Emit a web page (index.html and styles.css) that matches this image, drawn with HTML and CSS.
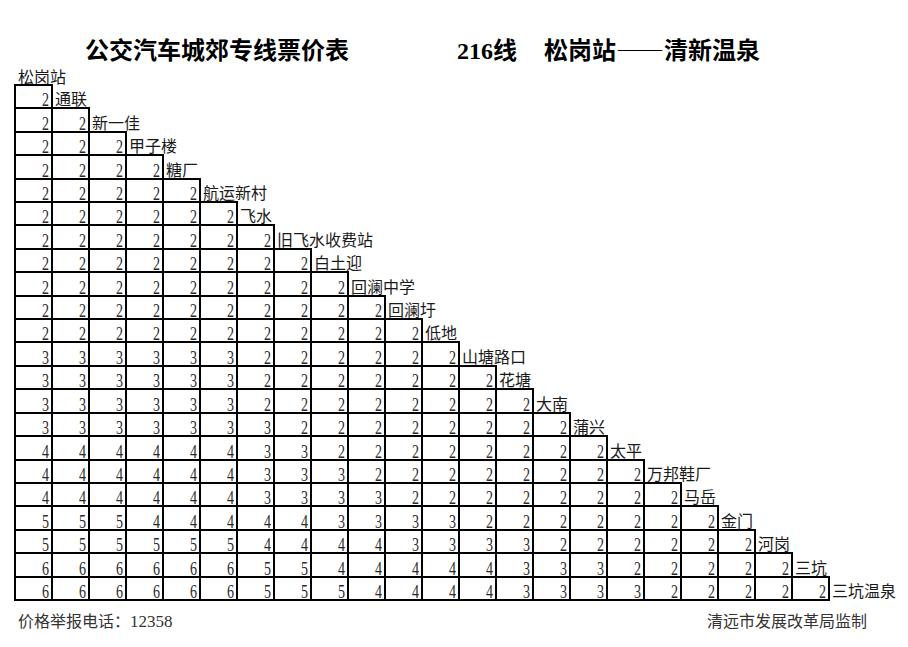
FILE: index.html
```html
<!DOCTYPE html>
<html lang="zh-CN">
<head>
<meta charset="utf-8">
<title>216线票价表</title>
<link rel="stylesheet" href="styles.css">
</head>
<body>
<div class="page">
  <div class="title">
    <span class="title-main">公交汽车城郊专线票价表</span>
    <span class="title-route"><span class="route-num">216</span>线<span class="route-stops">松岗站——清新温泉</span></span>
  </div>
  <div class="origin">松岗站</div>
  <div class="fare">
    <div class="row"><span class="c"><b>2</b></span><span class="stop">通联</span></div>
    <div class="row"><span class="c"><b>2</b></span><span class="c"><b>2</b></span><span class="stop">新一佳</span></div>
    <div class="row"><span class="c"><b>2</b></span><span class="c"><b>2</b></span><span class="c"><b>2</b></span><span class="stop">甲子楼</span></div>
    <div class="row"><span class="c"><b>2</b></span><span class="c"><b>2</b></span><span class="c"><b>2</b></span><span class="c"><b>2</b></span><span class="stop">糖厂</span></div>
    <div class="row"><span class="c"><b>2</b></span><span class="c"><b>2</b></span><span class="c"><b>2</b></span><span class="c"><b>2</b></span><span class="c"><b>2</b></span><span class="stop">航运新村</span></div>
    <div class="row"><span class="c"><b>2</b></span><span class="c"><b>2</b></span><span class="c"><b>2</b></span><span class="c"><b>2</b></span><span class="c"><b>2</b></span><span class="c"><b>2</b></span><span class="stop">飞水</span></div>
    <div class="row"><span class="c"><b>2</b></span><span class="c"><b>2</b></span><span class="c"><b>2</b></span><span class="c"><b>2</b></span><span class="c"><b>2</b></span><span class="c"><b>2</b></span><span class="c"><b>2</b></span><span class="stop">旧飞水收费站</span></div>
    <div class="row"><span class="c"><b>2</b></span><span class="c"><b>2</b></span><span class="c"><b>2</b></span><span class="c"><b>2</b></span><span class="c"><b>2</b></span><span class="c"><b>2</b></span><span class="c"><b>2</b></span><span class="c"><b>2</b></span><span class="stop">白土迎</span></div>
    <div class="row"><span class="c"><b>2</b></span><span class="c"><b>2</b></span><span class="c"><b>2</b></span><span class="c"><b>2</b></span><span class="c"><b>2</b></span><span class="c"><b>2</b></span><span class="c"><b>2</b></span><span class="c"><b>2</b></span><span class="c"><b>2</b></span><span class="stop">回澜中学</span></div>
    <div class="row"><span class="c"><b>2</b></span><span class="c"><b>2</b></span><span class="c"><b>2</b></span><span class="c"><b>2</b></span><span class="c"><b>2</b></span><span class="c"><b>2</b></span><span class="c"><b>2</b></span><span class="c"><b>2</b></span><span class="c"><b>2</b></span><span class="c"><b>2</b></span><span class="stop">回澜圩</span></div>
    <div class="row"><span class="c"><b>2</b></span><span class="c"><b>2</b></span><span class="c"><b>2</b></span><span class="c"><b>2</b></span><span class="c"><b>2</b></span><span class="c"><b>2</b></span><span class="c"><b>2</b></span><span class="c"><b>2</b></span><span class="c"><b>2</b></span><span class="c"><b>2</b></span><span class="c"><b>2</b></span><span class="stop">低地</span></div>
    <div class="row"><span class="c"><b>3</b></span><span class="c"><b>3</b></span><span class="c"><b>3</b></span><span class="c"><b>3</b></span><span class="c"><b>3</b></span><span class="c"><b>3</b></span><span class="c"><b>2</b></span><span class="c"><b>2</b></span><span class="c"><b>2</b></span><span class="c"><b>2</b></span><span class="c"><b>2</b></span><span class="c"><b>2</b></span><span class="stop">山塘路口</span></div>
    <div class="row"><span class="c"><b>3</b></span><span class="c"><b>3</b></span><span class="c"><b>3</b></span><span class="c"><b>3</b></span><span class="c"><b>3</b></span><span class="c"><b>3</b></span><span class="c"><b>2</b></span><span class="c"><b>2</b></span><span class="c"><b>2</b></span><span class="c"><b>2</b></span><span class="c"><b>2</b></span><span class="c"><b>2</b></span><span class="c"><b>2</b></span><span class="stop">花塘</span></div>
    <div class="row"><span class="c"><b>3</b></span><span class="c"><b>3</b></span><span class="c"><b>3</b></span><span class="c"><b>3</b></span><span class="c"><b>3</b></span><span class="c"><b>3</b></span><span class="c"><b>2</b></span><span class="c"><b>2</b></span><span class="c"><b>2</b></span><span class="c"><b>2</b></span><span class="c"><b>2</b></span><span class="c"><b>2</b></span><span class="c"><b>2</b></span><span class="c"><b>2</b></span><span class="stop">大南</span></div>
    <div class="row"><span class="c"><b>3</b></span><span class="c"><b>3</b></span><span class="c"><b>3</b></span><span class="c"><b>3</b></span><span class="c"><b>3</b></span><span class="c"><b>3</b></span><span class="c"><b>3</b></span><span class="c"><b>2</b></span><span class="c"><b>2</b></span><span class="c"><b>2</b></span><span class="c"><b>2</b></span><span class="c"><b>2</b></span><span class="c"><b>2</b></span><span class="c"><b>2</b></span><span class="c"><b>2</b></span><span class="stop">蒲兴</span></div>
    <div class="row"><span class="c"><b>4</b></span><span class="c"><b>4</b></span><span class="c"><b>4</b></span><span class="c"><b>4</b></span><span class="c"><b>4</b></span><span class="c"><b>4</b></span><span class="c"><b>3</b></span><span class="c"><b>3</b></span><span class="c"><b>2</b></span><span class="c"><b>2</b></span><span class="c"><b>2</b></span><span class="c"><b>2</b></span><span class="c"><b>2</b></span><span class="c"><b>2</b></span><span class="c"><b>2</b></span><span class="c"><b>2</b></span><span class="stop">太平</span></div>
    <div class="row"><span class="c"><b>4</b></span><span class="c"><b>4</b></span><span class="c"><b>4</b></span><span class="c"><b>4</b></span><span class="c"><b>4</b></span><span class="c"><b>4</b></span><span class="c"><b>3</b></span><span class="c"><b>3</b></span><span class="c"><b>3</b></span><span class="c"><b>2</b></span><span class="c"><b>2</b></span><span class="c"><b>2</b></span><span class="c"><b>2</b></span><span class="c"><b>2</b></span><span class="c"><b>2</b></span><span class="c"><b>2</b></span><span class="c"><b>2</b></span><span class="stop">万邦鞋厂</span></div>
    <div class="row"><span class="c"><b>4</b></span><span class="c"><b>4</b></span><span class="c"><b>4</b></span><span class="c"><b>4</b></span><span class="c"><b>4</b></span><span class="c"><b>4</b></span><span class="c"><b>3</b></span><span class="c"><b>3</b></span><span class="c"><b>3</b></span><span class="c"><b>3</b></span><span class="c"><b>2</b></span><span class="c"><b>2</b></span><span class="c"><b>2</b></span><span class="c"><b>2</b></span><span class="c"><b>2</b></span><span class="c"><b>2</b></span><span class="c"><b>2</b></span><span class="c"><b>2</b></span><span class="stop">马岳</span></div>
    <div class="row"><span class="c"><b>5</b></span><span class="c"><b>5</b></span><span class="c"><b>5</b></span><span class="c"><b>4</b></span><span class="c"><b>4</b></span><span class="c"><b>4</b></span><span class="c"><b>4</b></span><span class="c"><b>4</b></span><span class="c"><b>3</b></span><span class="c"><b>3</b></span><span class="c"><b>3</b></span><span class="c"><b>3</b></span><span class="c"><b>2</b></span><span class="c"><b>2</b></span><span class="c"><b>2</b></span><span class="c"><b>2</b></span><span class="c"><b>2</b></span><span class="c"><b>2</b></span><span class="c"><b>2</b></span><span class="stop">金门</span></div>
    <div class="row"><span class="c"><b>5</b></span><span class="c"><b>5</b></span><span class="c"><b>5</b></span><span class="c"><b>5</b></span><span class="c"><b>5</b></span><span class="c"><b>5</b></span><span class="c"><b>4</b></span><span class="c"><b>4</b></span><span class="c"><b>4</b></span><span class="c"><b>4</b></span><span class="c"><b>3</b></span><span class="c"><b>3</b></span><span class="c"><b>3</b></span><span class="c"><b>3</b></span><span class="c"><b>2</b></span><span class="c"><b>2</b></span><span class="c"><b>2</b></span><span class="c"><b>2</b></span><span class="c"><b>2</b></span><span class="c"><b>2</b></span><span class="stop">河岗</span></div>
    <div class="row"><span class="c"><b>6</b></span><span class="c"><b>6</b></span><span class="c"><b>6</b></span><span class="c"><b>6</b></span><span class="c"><b>6</b></span><span class="c"><b>6</b></span><span class="c"><b>5</b></span><span class="c"><b>5</b></span><span class="c"><b>4</b></span><span class="c"><b>4</b></span><span class="c"><b>4</b></span><span class="c"><b>4</b></span><span class="c"><b>4</b></span><span class="c"><b>3</b></span><span class="c"><b>3</b></span><span class="c"><b>3</b></span><span class="c"><b>2</b></span><span class="c"><b>2</b></span><span class="c"><b>2</b></span><span class="c"><b>2</b></span><span class="c"><b>2</b></span><span class="stop">三坑</span></div>
    <div class="row"><span class="c"><b>6</b></span><span class="c"><b>6</b></span><span class="c"><b>6</b></span><span class="c"><b>6</b></span><span class="c"><b>6</b></span><span class="c"><b>6</b></span><span class="c"><b>5</b></span><span class="c"><b>5</b></span><span class="c"><b>5</b></span><span class="c"><b>4</b></span><span class="c"><b>4</b></span><span class="c"><b>4</b></span><span class="c"><b>4</b></span><span class="c"><b>3</b></span><span class="c"><b>3</b></span><span class="c"><b>3</b></span><span class="c"><b>3</b></span><span class="c"><b>2</b></span><span class="c"><b>2</b></span><span class="c"><b>2</b></span><span class="c"><b>2</b></span><span class="c"><b>2</b></span><span class="stop">三坑温泉</span></div>
  </div>
  <div class="footer">
    <span class="hotline">价格举报电话：<span class="num">12358</span></span>
    <span class="issuer">清远市发展改革局监制</span>
  </div>
</div>
</body>
</html>
```

FILE: styles.css
```css
* {
  box-sizing: border-box;
}

html, body {
  margin: 0;
  padding: 0;
  background: #ffffff;
}

body {
  color: #1a1a1a;
  font-family: "Noto Sans CJK SC", sans-serif;
}

.page {
  width: 908px;
  height: 647px;
  padding-top: 37px;
}

.title {
  display: flex;
  height: 24px;
  font-size: 24px;
  line-height: 24px;
  font-weight: 700;
  color: #000;
  white-space: nowrap;
}

.title-main {
  margin-left: 85px;
}

.title-route {
  margin-left: 108px;
}

.route-num {
  font-family: "Liberation Serif", serif;
  font-weight: 700;
}

.route-stops {
  margin-left: 27px;
}

.origin {
  margin: 7px 0 1px 18px;
  height: 16px;
  font-size: 16px;
  line-height: 16px;
}

.fare {
  margin-left: 15px;
  display: flex;
  flex-direction: column;
}

.row {
  display: flex;
  height: 23.42px;
}

.c {
  width: 37px;
  flex: none;
  outline: 2px solid #000;
  outline-offset: -1px;
  display: flex;
  justify-content: flex-end;
  align-items: flex-end;
  padding: 0 3px 1px 0;
}

.c b {
  display: block;
  font-family: "Liberation Serif", serif;
  font-weight: 400;
  font-size: 18px;
  line-height: 14px;
  color: #2a2a2a;
  transform: scaleX(0.78);
  transform-origin: right bottom;
}

.stop {
  align-self: flex-end;
  padding: 0 0 2px 3px;
  font-size: 16px;
  line-height: 16px;
  white-space: nowrap;
  color: #1a1a1a;
}

.footer {
  display: flex;
  justify-content: space-between;
  margin-top: 12px;
  padding: 0 41px 0 18px;
  font-size: 16px;
  line-height: 16px;
  color: #333;
}

.num {
  font-family: "Liberation Serif", serif;
  font-size: 17px;
}
```
